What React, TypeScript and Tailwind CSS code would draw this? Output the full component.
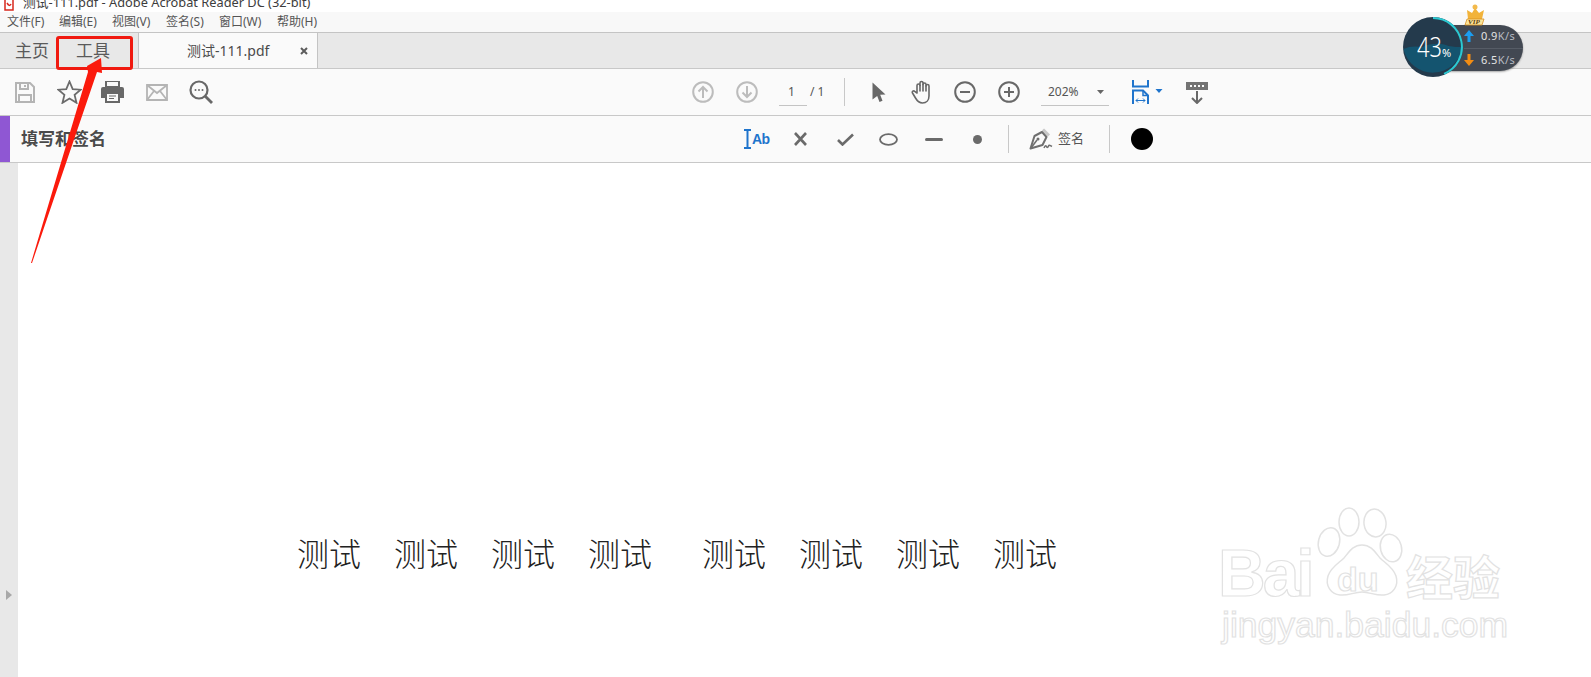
const menus = [
  { label: "文件(F)", width: "w-[52px]" },
  { label: "编辑(E)", width: "w-[53px]" },
  { label: "视图(V)", width: "w-[54px]" },
  { label: "签名(S)", width: "w-[53px]" },
  { label: "窗口(W)", width: "w-[58px]" },
  { label: "帮助(H)", width: "w-[50px]" },
];

const uiFont = "font-['Noto_Sans','Noto_Sans_CJK_SC',sans-serif]";

function SaveIcon() {
  return (
    <svg width="20" height="21" viewBox="0 0 20 21" fill="none" stroke="#b4b4b4" strokeWidth="2">
      <path d="M1 1h14l4 4v15H1z" />
      <path d="M5 1v6h8V1M4 20v-7h12v7" />
      <path d="M10 3v2" />
    </svg>
  );
}

function StarIcon() {
  return (
    <svg width="25" height="24" viewBox="0 0 25 24" fill="none" stroke="#6b6b6b" strokeWidth="1.8">
      <path d="M12.5 1.5l3.2 7.6 8 .6-6.100 5.200 1.900 7.900-7-4.300-7 4.300 1.900-7.900L1.300 9.700l8-.6z" />
    </svg>
  );
}

function PrintIcon() {
  return (
    <svg width="23" height="23" viewBox="0 0 23 23">
      <path d="M5 0h13v6H5z" fill="none" stroke="#686868" strokeWidth="2" />
      <path d="M2 6h19a2 2 0 0 1 2 2v9h-4v5H4v-5H0V8a2 2 0 0 1 2-2z" fill="#686868" />
      <path d="M6 13h11v7H6z" fill="#fafafa" />
      <path d="M8 15h7M8 17.500h5" stroke="#686868" strokeWidth="1.200" />
    </svg>
  );
}

function MailIcon() {
  return (
    <svg width="22" height="17" viewBox="0 0 22 17" fill="none" stroke="#b4b4b4" strokeWidth="1.800">
      <path d="M1 1h20v15H1z" />
      <path d="M1 1l10 8 10-8M1 16l7-9M21 16l-7-9" />
    </svg>
  );
}

function SearchIcon() {
  return (
    <svg width="24" height="24" viewBox="0 0 24 24" fill="none" stroke="#686868">
      <circle cx="10" cy="10" r="8.500" strokeWidth="2.200" />
      <path d="M16 16l7 7" strokeWidth="2.800" />
      <circle cx="6.500" cy="10" r="1" fill="#686868" stroke="none" />
      <circle cx="10" cy="10" r="1" fill="#686868" stroke="none" />
      <circle cx="13.500" cy="10" r="1" fill="#686868" stroke="none" />
    </svg>
  );
}

function PageArrow({ down }: { down?: boolean }) {
  return (
    <svg width="22" height="22" viewBox="0 0 22 22" fill="none" stroke="#bcbcbc" strokeWidth="2">
      <circle cx="11" cy="11" r="9.800" />
      {down ? <path d="M11 5v11M6.500 11.500L11 16l4.500-4.500" /> : <path d="M11 17V6M6.500 10.500L11 6l4.500 4.500" />}
    </svg>
  );
}

function CursorIcon() {
  return (
    <svg width="14" height="21" viewBox="0 0 14 21">
      <path d="M0.500 0.500L13.500 12.500l-5.300.3 2.300 6-3 1.200-2.300-6-4.700 3.500z" fill="#686868" />
    </svg>
  );
}

function HandIcon() {
  return (
    <svg width="23" height="24" viewBox="0 0 23 24" fill="none" stroke="#686868" strokeWidth="1.600" strokeLinecap="round" strokeLinejoin="round">
      <path d="M6 13V5.500a1.500 1.500 0 0 1 3 0V3a1.500 1.500 0 0 1 3 0v1.500a1.500 1.500 0 0 1 3 0V6a1.500 1.500 0 0 1 3 0v10c0 4-2.500 7-6.500 7-3.500 0-5-1.500-7-5l-3-5c-.8-1.500 1-2.800 2.200-1.600L6 13z" />
      <path d="M9 5.500V11M12 4.500V11M15 6v5" />
    </svg>
  );
}

function ZoomButton({ plus }: { plus?: boolean }) {
  return (
    <svg width="22" height="22" viewBox="0 0 22 22" fill="none" stroke="#686868" strokeWidth="2">
      <circle cx="11" cy="11" r="9.800" />
      <path d="M6 11h10" />
      {plus && <path d="M11 6v10" />}
    </svg>
  );
}

function FitIcon() {
  return (
    <svg width="31" height="24" viewBox="0 0 31 24" fill="none">
      <path d="M1 0v6.500h15V0" stroke="#1f74cc" strokeWidth="2" />
      <path d="M1 24V10.500h10l5 5V24" stroke="#1f74cc" strokeWidth="2" />
      <path d="M11 10.500v5h5" stroke="#1f74cc" strokeWidth="1.500" />
      <path d="M4 20.500h9M4 20.500l2-2M4 20.500l2 2M13 20.500l-2-2M13 20.500l-2 2" stroke="#1f74cc" strokeWidth="1" />
      <path d="M23.500 9h7l-3.500 4z" fill="#1f74cc" />
    </svg>
  );
}

function ReadIcon() {
  return (
    <svg width="22" height="23" viewBox="0 0 22 23" fill="none">
      <path d="M0 1h22v8H0z" fill="#737373" />
      <path d="M4 4h2v2H4zM8 4h2v2H8zM12 4h2v2h-2zM16 4h2v2h-2z" fill="#fafafa" />
      <path d="M11 10v12M6 17l5 5 5-5" stroke="#686868" strokeWidth="2" />
    </svg>
  );
}

function SignIcon() {
  return (
    <svg width="24" height="22" viewBox="0 0 24 22" fill="none">
      <path d="M14 1.500l6 6" stroke="#c8c8c8" strokeWidth="3" />
      <path d="M13 4L5.500 8 1.500 20.500 13.500 17l4-8z" stroke="#6f6f6f" strokeWidth="2" strokeLinejoin="round" />
      <path d="M2 20l6-8" stroke="#6f6f6f" strokeWidth="1.500" />
      <circle cx="9" cy="11" r="1.500" fill="#6f6f6f" />
      <path d="M15 20c1-2 2-3 2.500-1.500s1.500 1 2-.5 1.500-.5 3.500.5" stroke="#6f6f6f" strokeWidth="1.500" />
    </svg>
  );
}

function Vip() {
  return (
    <div className="absolute left-[36px] top-[-21px] h-[22px] w-[22px]">
      <svg width="22" height="22" viewBox="0 0 22 22">
        <path d="M3 6l5 3 3-5 4 5 5-3-2 9H4z" fill="#f2b33a" />
        <circle cx="11" cy="3" r="2.500" fill="#f3ba4c" />
        <path d="M3 15h17l-2 6H1z" fill="#fbe39a" stroke="#d98f1e" strokeWidth="0.800" />
      </svg>
      <span className="absolute left-[4px] top-[14px] font-['Liberation_Serif'] text-[7px] font-bold italic leading-[8px] text-[#5a3a08]">
        VIP
      </span>
    </div>
  );
}

function SpeedWidget() {
  return (
    <div className={`absolute left-[1402px] top-[16px] h-[62px] w-[122px] ${uiFont}`}>
      <div className="absolute left-[26px] top-[9px] flex h-[46px] w-[95px] flex-col rounded-r-[23px] bg-[#424852] pl-[36px] shadow-[0_1px_2px_#0005]">
        <div className="flex flex-1 items-center border-b border-[#565c66] text-[11px] tracking-[0.4px] text-[#e4e4e4]">
          <svg className="mr-[7px]" width="10" height="12" viewBox="0 0 10 12">
            <path d="M5 0l5 6H6.500v6h-3V6H0z" fill="#1b9df0" />
          </svg>
          <span>0.9</span>
          <span className="text-[#b8bcc2]">K/s</span>
        </div>
        <div className="flex flex-1 items-center text-[11px] tracking-[0.4px] text-[#e4e4e4]">
          <svg className="mr-[7px]" width="10" height="12" viewBox="0 0 10 12">
            <path d="M5 12L0 6h3.500V0h3v6H10z" fill="#f28c13" />
          </svg>
          <span>6.5</span>
          <span className="text-[#b8bcc2]">K/s</span>
        </div>
        <Vip />
      </div>
      <svg className="absolute left-0 top-0" width="62" height="62" viewBox="0 0 62 62">
        <circle cx="31" cy="31" r="30" fill="#243a4c" />
        <path d="M1.500 33c6-3 12-3 19-2 8-4 19-4 26-1 5 1 10 1 14 1a30 30 0 0 1-59 2z" fill="#14546f" />
        <path d="M31 2a29 29 0 0 1 11 55.800" fill="none" stroke="#2cc9d2" strokeWidth="2" />
      </svg>
      <div className="absolute left-[15px] top-[14px] flex items-baseline text-white">
        <span className="w-[22px] origin-left scale-x-[0.78] text-[28px] font-light leading-[32px]">43</span>
        <span className="ml-[3px] text-[11px]">%</span>
      </div>
    </div>
  );
}

function Watermark() {
  const outlined = "absolute leading-none text-white [-webkit-text-stroke:1.2px_#e2e2e2]";
  return (
    <div className="absolute left-[1210px] top-[500px] h-[150px] w-[300px] font-['Liberation_Sans','Noto_Sans_CJK_SC',sans-serif]">
      <svg className="absolute left-[100px] top-[5px]" width="95" height="95" viewBox="0 0 95 95" fill="#fff" stroke="#e2e2e2" strokeWidth="1.500">
        <ellipse cx="19" cy="37" rx="10.500" ry="14.500" transform="rotate(15 19 37)" />
        <ellipse cx="39" cy="17" rx="10" ry="14" />
        <ellipse cx="65" cy="18" rx="11" ry="14" transform="rotate(-8 65 18)" />
        <ellipse cx="81" cy="43" rx="10.500" ry="14" transform="rotate(-15 81 43)" />
        <path d="M52 40c9 0 13 7 18 13 5 5 13 9 16 18 3 10-3 18-12 19-8 1-14-3-22-3s-14 4-22 3c-9-1-15-9-12-19 3-9 11-13 16-18 5-6 9-13 18-13z" />
      </svg>
      <span className={`${outlined} left-[8px] top-[40px] text-[66px] font-bold tracking-[-3px]`}>Bai</span>
      <span className={`${outlined} left-[127px] top-[62px] text-[34px] font-bold`}>du</span>
      <span className={`${outlined} left-[196px] top-[55px] text-[47px] font-bold`}>经验</span>
      <span className={`${outlined} left-[12px] top-[108px] text-[35.5px]`}>jingyan.baidu.com</span>
    </div>
  );
}

function Annotation() {
  return (
    <>
      <div className="absolute left-[56px] top-[36px] h-[34px] w-[77px] rounded-[3px] border-[3px] border-[#f0190f]" />
      <svg className="absolute left-0 top-0" width="120" height="280" viewBox="0 0 120 280">
        <path d="M31 263L88 72l-1-6 14-8 1 15-5-1-65 191z" fill="#fb1a0c" />
      </svg>
    </>
  );
}

export default function App() {
  const textGroupsA = ["测试", "测试", "测试", "测试"];

  return (
    <div className={`relative h-[677px] w-[1591px] overflow-hidden bg-white ${uiFont}`}>
      {/* title bar is cut off by the screenshot */}
      <div className="flex h-[12px] items-end overflow-hidden bg-white pl-[4px]">
        <svg className="mb-[1px] mr-[9px] shrink-0" width="10" height="14" viewBox="0 0 10 14" fill="none" stroke="#d8281e" strokeWidth="1.500">
          <path d="M1 0v13h8V0M3 6c2 3 3 3 4 1" />
        </svg>
        <span className="whitespace-nowrap text-[12.8px] leading-[19px] text-[#3d3d3d]">
          测试-111.pdf - Adobe Acrobat Reader DC (32-bit)
        </span>
      </div>

      <div className="flex h-[20px] items-center bg-[#f8f8f8] pl-[7px] text-[12px] text-[#555]">
        {menus.map((m) => (
          <span key={m.label} className={`${m.width} whitespace-nowrap`}>
            {m.label}
          </span>
        ))}
      </div>

      <div className="flex h-[36px] items-stretch border-t border-[#c4c4c4] bg-[#e8e8e8]">
        <div className="flex w-[138px] items-center pl-[15px] text-[17px] text-[#5a5a5a]">
          <span className="w-[61px]">主页</span>
          <span>工具</span>
        </div>
        <div className="flex w-[180px] items-center border-x border-[#c4c4c4] bg-[#fafafa] pl-[48px] text-[14px] text-[#4a4a4a]">
          <span className="w-[113px] whitespace-nowrap">测试-111.pdf</span>
          <svg width="8" height="8" viewBox="0 0 8 8" stroke="#5c5c5c" strokeWidth="2">
            <path d="M1 1l6 6M7 1L1 7" />
          </svg>
        </div>
      </div>

      <div className="flex h-[48px] items-center border-y border-[#c8c8c8] bg-[#fafafa] pl-[15px]">
        <SaveIcon />
        <span className="ml-[22px]">
          <StarIcon />
        </span>
        <span className="ml-[19px]">
          <PrintIcon />
        </span>
        <span className="ml-[22px]">
          <MailIcon />
        </span>
        <span className="ml-[21px]">
          <SearchIcon />
        </span>
        <span className="ml-[479px]">
          <PageArrow />
        </span>
        <span className="ml-[22px]">
          <PageArrow down />
        </span>
        <div className="ml-[21px] flex h-[28px] w-[28px] items-center justify-center border-b border-[#c4c4c4] pr-[3px] text-[12px] text-[#555]">
          1
        </div>
        <span className="ml-[3px] w-[34px] text-[12px] text-[#555]">/ 1</span>
        <div className="h-[28px] w-px bg-[#c8c8c8]" />
        <span className="ml-[27px]">
          <CursorIcon />
        </span>
        <span className="ml-[25px]">
          <HandIcon />
        </span>
        <span className="ml-[20px]">
          <ZoomButton />
        </span>
        <span className="ml-[22px]">
          <ZoomButton plus />
        </span>
        <div className="ml-[21px] flex h-[28px] w-[68px] items-center border-b border-[#c4c4c4] pl-[7px] text-[12px] text-[#555]">
          <span className="w-[49px]">202%</span>
          <svg width="7" height="4" viewBox="0 0 7 4">
            <path d="M0 0h7L3.500 4z" fill="#666" />
          </svg>
        </div>
        <span className="ml-[23px]">
          <FitIcon />
        </span>
        <span className="ml-[23px]">
          <ReadIcon />
        </span>
      </div>

      <div className="flex h-[47px] items-stretch border-b border-[#c8c8c8] bg-[#fafafa]">
        <div className="w-[10px] bg-[#8f57d3]" />
        <div className="flex flex-1 items-center">
          <span className="ml-[11px] w-[723px] text-[17px] font-bold text-[#4a4a4a]">填写和签名</span>
          <div className="relative flex w-[26px] items-center">
            <svg width="7" height="20" viewBox="0 0 7 20" fill="none" stroke="#1f74cc" strokeWidth="2">
              <path d="M0 1h7M3.500 1v18M0 19h7" />
            </svg>
            <span className="ml-[1px] font-['Liberation_Sans'] text-[14px] font-bold tracking-[-0.5px] text-[#1f74cc]">Ab</span>
          </div>
          <svg className="ml-[24px]" width="13" height="14" viewBox="0 0 13 14" stroke="#6a6a6a" strokeWidth="2.600">
            <path d="M1 1l11 12M12 1L1 13" />
          </svg>
          <svg className="ml-[30px]" width="17" height="13" viewBox="0 0 17 13" fill="none" stroke="#6a6a6a" strokeWidth="2.600">
            <path d="M1 7l4.500 4.500L16 1.500" />
          </svg>
          <svg className="ml-[25px]" width="19" height="13" viewBox="0 0 19 13" fill="none" stroke="#6a6a6a" strokeWidth="1.800">
            <ellipse cx="9.500" cy="6.500" rx="8.500" ry="5.300" />
          </svg>
          <div className="ml-[27px] h-[3px] w-[18px] rounded-full bg-[#6a6a6a]" />
          <div className="ml-[30px] h-[9px] w-[9px] rounded-full bg-[#6a6a6a]" />
          <div className="ml-[26px] h-[28px] w-px bg-[#c8c8c8]" />
          <span className="ml-[20px]">
            <SignIcon />
          </span>
          <span className="ml-[5px] w-[51px] text-[13px] text-[#555]">签名</span>
          <div className="h-[28px] w-px bg-[#c8c8c8]" />
          <div className="ml-[21px] h-[22px] w-[22px] rounded-full bg-black" />
        </div>
      </div>

      <div className="flex h-[514px]">
        <div className="flex w-[18px] items-center bg-[#e8e8e8] pl-[6px] pt-[349px]">
          <div className="h-0 w-0 border-y-[5.5px] border-l-[6px] border-y-transparent border-l-[#a8a8a8]" />
        </div>
        <div className="flex flex-1 items-start gap-[33px] pl-[279px] pt-[372px] font-['Liberation_Serif','Noto_Sans_CJK_SC',serif] text-[32px] font-light leading-[40px] text-[#222]">
          {textGroupsA.map((t, i) => (
            <span key={i}>{t}</span>
          ))}
          <span className="ml-[17px]">测试</span>
          <span>测试</span>
          <span>测试</span>
          <span>测试</span>
        </div>
      </div>

      <Annotation />
      <SpeedWidget />
      <Watermark />
    </div>
  );
}
